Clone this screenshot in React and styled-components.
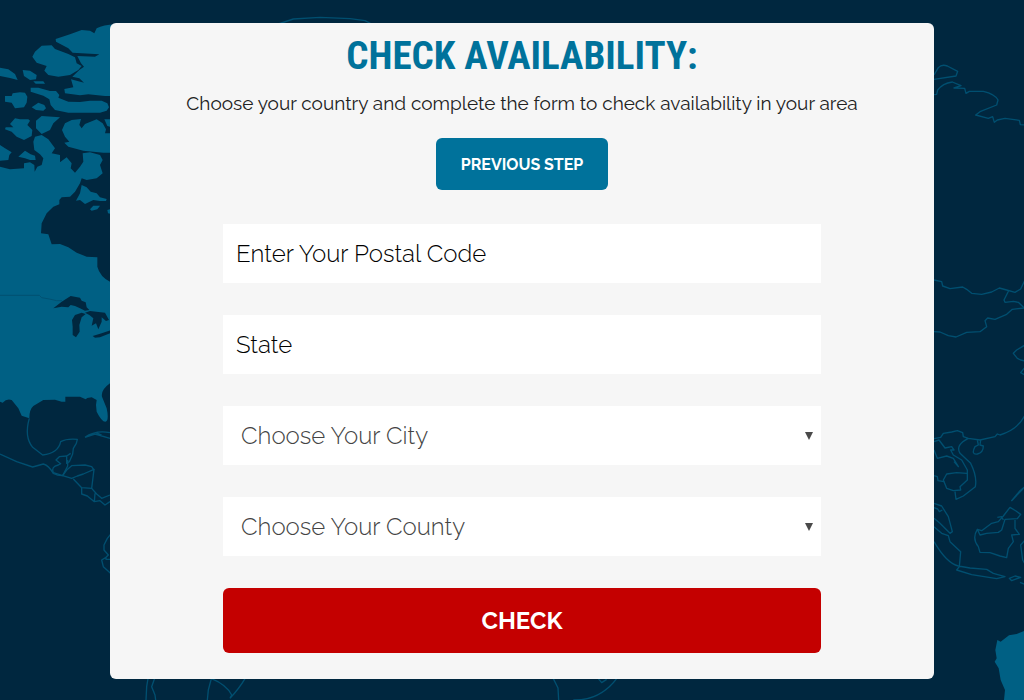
import React from "react";
import styled, { createGlobalStyle } from "styled-components";

const GlobalStyle = createGlobalStyle`
  * {
    box-sizing: border-box;
  }

  body {
    margin: 0;
    background: #00273f;
    font-family: Raleway, Lato, "Open Sans", sans-serif;
  }
`;

const Page = styled.div`
  display: grid;
  min-height: 100vh;
`;

const MapLayer = styled.div`
  grid-area: 1 / 1;
  display: grid;
  height: 100vh;
  overflow: hidden;

  svg {
    width: 100%;
    height: 100%;
  }
`;

const Content = styled.main`
  grid-area: 1 / 1;
  z-index: 1;
  padding: 23px 90px 21px 110px;

  @media (max-width: 700px) {
    padding: 16px;
  }
`;

const Card = styled.section`
  display: flex;
  flex-direction: column;
  align-items: center;
  padding: 8px 113px 26px;

  background: #f6f6f6;
  border-radius: 6px;

  @media (max-width: 700px) {
    padding: 8px 16px 24px;
  }
`;

const Title = styled.h1`
  margin: 0;

  color: #00729b;
  font-family: "Roboto Condensed", "Liberation Sans Narrow", Roboto, sans-serif;
  font-size: 39px;
  font-weight: 700;
  line-height: 50px;
  text-align: center;
  text-transform: uppercase;
`;

const Intro = styled.p`
  margin: 10px -56px 23px;

  color: #222;
  font-size: 19px;
  line-height: 24px;
  text-align: center;

  @media (max-width: 700px) {
    margin: 10px 0 23px;
  }
`;

const Button = styled.button`
  border: 0;
  border-radius: 6px;
  padding: 0 25px;

  background: ${(props) => props.$background};
  color: #fff;
  font-family: inherit;
  font-weight: 700;
  text-transform: uppercase;
  cursor: pointer;
`;

const PreviousButton = styled(Button)`
  height: 52px;
  font-size: 16px;
`;

const CheckButton = styled(Button)`
  height: 65px;
  font-size: 24px;
`;

const Form = styled.form`
  display: flex;
  flex-direction: column;
  gap: 32px;
  width: 100%;
  margin-top: 34px;
`;

const TextField = styled.input`
  width: 100%;
  height: 59px;
  border: 0;
  padding: 0 13px;

  background: #fff;
  color: #111;
  font-family: inherit;
  font-size: 24px;
  font-weight: 300;

  &::placeholder {
    color: #000;
    opacity: 1;
  }
`;

const SelectWrap = styled.div`
  display: grid;
  align-items: center;
  background: #fff;

  svg {
    grid-area: 1 / 1;
    justify-self: end;
    margin-right: 8px;
    pointer-events: none;
  }
`;

const Select = styled.select`
  grid-area: 1 / 1;
  width: 100%;
  height: 59px;
  border: 0;
  padding: 0 32px 0 18px;

  appearance: none;
  background: transparent;
  color: #444;
  font-family: inherit;
  font-size: 24px;
  font-weight: 300;
`;

const land = [
  // mainland
  "M0 500 30 508 72 505 72 490 90 487 103 495 104 515 112 500 125 495 130 475 120 463 103 450 100 425 105 410 125 405 145 418 165 445 155 460 180 465 180 487 200 472 215 490 212 505 225 518 240 500 250 485 248 460 270 457 300 465 308 480 300 495 308 520 290 535 260 540 245 535 240 550 225 575 210 590 185 592 178 600 178 613 160 620 140 640 125 670 123 700 145 703 155 733 180 732 205 742 230 758 260 770 292 772 292 800Q300 830 330 845L345 848V1145L330 1150Q302 1170 306 1190L320 1225Q328 1262 316 1265Q305 1265 290 1235L288 1215 290 1200 275 1192 262 1194 257 1198 240 1190 196 1190 196 1205 185 1205 165 1199 130 1200 100 1218Q88 1228 88 1255L65 1247 55 1225 35 1200Q20 1195 8 1208L0 1205Z",
  // arctic islands
  "M167 117 210 103 245 90 270 92 283 100 290 85Q310 75 345 73V288H315L265 283 240 286 195 280 193 267 220 262 213 238 252 248 238 235 217 230 238 210 252 200 243 190 232 168 285 170 298 163 218 158 205 145 168 125Z",
  "M97 170 105 155 125 137 155 136 165 147 205 162 225 172 230 190 245 198 235 210 210 225 175 230 145 225 133 212 140 198 110 188Z",
  "M0 203 25 208 45 222 53 240 30 234 0 228Z",
  "M68 210 90 212 110 225 108 238 90 240 72 228Z",
  "M100 244 130 244 135 251 107 251Z",
  "M92 263 115 263 150 273 168 273 178 285 175 293 205 305 240 306 270 302 305 302 322 310 327 322 320 332 300 338 205 338 165 330 152 315 148 298 130 287 92 275Z",
  "M15 288 35 288 38 280 60 277 75 278 82 290 80 308 72 322 45 325 35 308 15 305Z",
  "M95 322 115 308 133 315 138 325 130 332 108 330Z",
  "M30 372 45 355 60 358 85 358 90 362 82 375 97 390 95 408 72 420 50 410 35 395 15 388 17 382 40 382Z",
  "M108 362 125 348 180 352 160 370 150 390 125 402 108 385Z",
  "M186 390 195 370 215 360 243 357 238 375 245 385 255 372 290 358 308 370 318 388 315 400 345 400 345 458 310 458 250 452 205 440 193 428 208 425 195 410Z",
  "M313 358 345 358 345 385 322 378Z",
  "M0 435 15 445 35 457 28 465 25 480 0 482Z",
  "M55 470 75 452 92 463 105 467 107 480 90 480 75 475Z",
  "M245 555 260 562 272 575 290 580 300 592 320 597 318 603 300 603 280 600 255 612 240 600 228 602 240 580Z",
  "M270 628 280 617 300 617 292 628 275 632Z",
  "M322 630 334 626 334 642 324 640Z",
  // australia
  "M3100 1888 3072 1893 3050 1902 3027 1906 3002 1925 2992 1920 2986 1950 2990 1975 2984 1985 2996 2005 3002 2040 3015 2070 3012 2100H3100Z",
];

const lakes = [
  "M160 925 185 905 212 888 240 893 245 902 257 907 260 922 268 930 255 932 240 925 225 918 212 915 205 922 185 920Z",
  "M216 960 225 945 245 938 257 942 245 952 238 975 239 995 228 1012 218 1005 218 980Z",
  "M255 938 270 933 315 938 327 960 318 963 305 952 305 965 295 988 288 970 275 977 280 955 268 945Z",
  "M278 1008 305 1000 334 990 334 998 300 1012 285 1013Z",
];

const westLines = [
  "M88 1255Q72 1310 98 1342L128 1365Q175 1360 182 1325Q200 1315 232 1318L229 1330 220 1345 218 1362 208 1385 200 1390 200 1368 212 1360",
  "M0 1362 50 1385 98 1401 130 1392Q145 1395 160 1420 175 1428 188 1427L200 1410 215 1397 255 1395 275 1400 282 1410",
  "M188 1427 160 1418Q152 1400 175 1395L182 1391 168 1380 178 1370 200 1368M203 1380V1398L188 1427 215 1435 232 1428 250 1422 282 1408 275 1465 245 1463 220 1437",
  "M245 1463V1482L262 1488 283 1505 300 1502 315 1515 330 1505M275 1465 290 1482 305 1495 330 1485M283 1505 285 1480",
  "M255 1312Q285 1290 330 1298M255 1312 285 1302 330 1315M288 1298 305 1305",
  "M334 1600 322 1615 312 1635 312 1650 325 1665 318 1672 305 1680 310 1700 334 1722M318 1672 318 1678 334 1678",
];

const eastLines = [
  "M2802 225 2815 203Q2825 192 2842 198L2873 214 2868 228 2802 238M2802 284 2810 283 2813 270Q2828 250 2857 246L2883 257 2862 264 2894 265 2898 280 2908 274H2950Q2985 282 2994 300L2990 315 2940 335 2927 345 2965 355 2978 350 2983 367 2992 360 3015 355 3058 361 3061 374 3080 375",
  "M2802 840 2825 845 2828 858 2850 866 2888 861 2900 868 2915 880 2945 883 2975 876 2998 864 3020 870 3045 877 3062 867 3075 840M3027 870 3012 900 3015 907 3040 904 3055 907 3072 923",
  "M2802 995 2820 996 2845 1007 2868 1011 2900 997 2940 995 2960 980 2955 962 2963 954 2985 958 3020 943 3037 928 3072 924",
  "M3075 1035 3050 1050 3040 1060 3052 1075 3062 1080 3075 1083M3075 1102 3062 1118 3075 1125",
  "M3075 1245Q3055 1288 3000 1305L2992 1302 2985 1310 2940 1320 2905 1315 2890 1310 2888 1298 2872 1292 2855 1296 2830 1300 2822 1312 2802 1316M2932 1320 2935 1335 2925 1340Q2912 1365 2932 1362 2950 1358 2950 1338L2940 1335 2942 1320M2905 1315Q2865 1335 2880 1360L2912 1390Q2932 1430 2926 1460L2890 1488 2868 1498 2865 1475M2802 1325 2817 1320 2835 1344 2855 1340 2862 1350 2852 1350 2860 1365 2885 1380 2902 1410 2902 1440 2880 1460 2882 1470 2860 1472 2840 1465 2830 1440 2840 1422 2870 1418 2900 1420M2802 1350 2812 1375 2840 1368 2860 1375 2875 1400 2862 1385",
  "M2802 1427 2812 1430 2814 1442 2833 1445M2802 1510 2825 1518 2845 1550 2857 1595 2850 1600 2820 1570 2802 1555M2802 1523 2813 1527 2818 1535 2827 1530M2802 1580 2825 1600 2845 1607 2850 1625 2882 1655 2878 1700M2802 1625Q2840 1690 2875 1698L2910 1704 2960 1708 2980 1720 3015 1730 2990 1736 2915 1724 2870 1710 2878 1700",
  "M2932 1588 2945 1592 2975 1570 2995 1565 3010 1548 3030 1522 3048 1533 3062 1543 3052 1556 3015 1558 3005 1590 2995 1597 2960 1600 2940 1605 2932 1588Q2915 1615 2935 1640L2940 1657 2970 1658 3000 1668 3020 1673 3025 1645 3040 1625 3035 1605 3058 1603 3045 1585 3045 1560M2992 1552 3005 1550 3010 1560",
  "M3080 1455 3035 1502 3060 1472 3080 1455M3028 1735 3045 1728 3062 1732 3035 1742ZM3075 1620 3062 1635 3068 1680 3080 1700M3060 1747 3080 1755",
];

const edgeLines = [
  "M835 72 880 57 960 52 1050 56 1095 62 1115 72",
  "M445 2030 440 2060 438 2100M465 2032 455 2060 465 2085 467 2100M635 2032 625 2070 622 2100M635 2036Q680 2055 695 2085L690 2095M735 2036Q718 2065 690 2095",
  "M1660 2036 1674 2064 1676 2100M1795 2036 1805 2048 1820 2038M1850 2036Q1800 2102 1720 2100",
];

function WorldMap() {
  return (
    <svg viewBox="0 0 3072 2100" preserveAspectRatio="xMidYMid slice" aria-hidden="true">
      {land.map((d) => (
        <path key={d} d={d} fill="#006084" />
      ))}
      {lakes.map((d) => (
        <path key={d} d={d} fill="#00273f" />
      ))}
      <path d="M0 886H118L125 893 148 897 170 902 186 902" fill="none" stroke="#005172" strokeWidth="3" />
      <g fill="none" stroke="#004f70" strokeWidth="4" strokeLinejoin="round">
        {[...westLines, ...eastLines, ...edgeLines].map((d) => (
          <path key={d} d={d} />
        ))}
      </g>
    </svg>
  );
}

function Dropdown(props) {
  return (
    <SelectWrap>
      <Select aria-label={props.label} defaultValue="">
        <option value="">{props.label}</option>
      </Select>
      <svg width="8" height="8" viewBox="0 0 8 8" aria-hidden="true">
        <path d="M0 0H8L4 8Z" fill="#4a4a4a" />
      </svg>
    </SelectWrap>
  );
}

function App() {
  return (
    <Page>
      <GlobalStyle />
      <MapLayer>
        <WorldMap />
      </MapLayer>
      <Content>
        <Card>
          <Title>Check Availability:</Title>
          <Intro>Choose your country and complete the form to check availability in your area</Intro>
          <PreviousButton type="button" $background="#00729b">Previous Step</PreviousButton>
          <Form onSubmit={(e) => e.preventDefault()}>
            <TextField type="text" aria-label="Enter Your Postal Code" placeholder="Enter Your Postal Code" />
            <TextField type="text" aria-label="State" placeholder="State" />
            <Dropdown label="Choose Your City" />
            <Dropdown label="Choose Your County" />
            <CheckButton type="submit" $background="#c40000">Check</CheckButton>
          </Form>
        </Card>
      </Content>
    </Page>
  );
}

export default App;
